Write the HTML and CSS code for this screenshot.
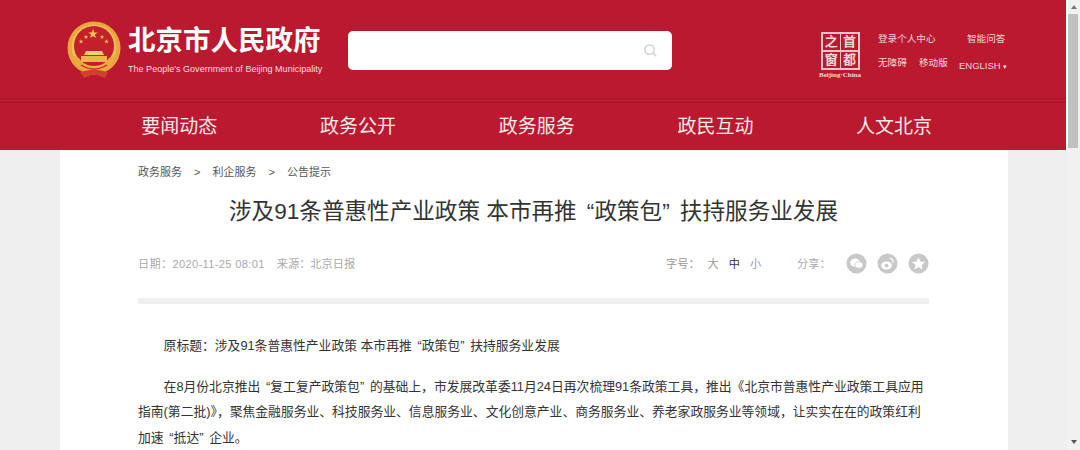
FILE: index.html
```html
<!DOCTYPE html>
<html lang="zh-CN">
<head>
  <meta charset="UTF-8" />
  <title>北京市人民政府</title>
  <link rel="stylesheet" href="styles.css">
</head>
<body>
  <div class="page">
    <header>
      <div class="top-bar">
        <svg class="emblem" viewBox="0 0 54 58" width="54" height="58">
          <defs>
            <polygon id="star" points="0,-5 1.2,-1.6 4.8,-1.5 1.9,0.6 2.9,4 0,2 -2.9,4 -1.9,0.6 -4.8,-1.5 -1.2,-1.6"/>
          </defs>
          <circle cx="27" cy="27" r="26.5" fill="#e9a63c"/>
          <circle cx="27" cy="26" r="22.5" fill="#f0be5a"/>
          <circle cx="27" cy="25" r="20" fill="#c4202c"/>
          <use href="#star" x="26" y="13" fill="#f5cb58"/>
          <use href="#star" x="14" y="21" fill="#f0b95a" transform="translate(7 10) scale(.5)"/>
          <use href="#star" x="18" y="16" fill="#f0b95a" transform="translate(10 8) scale(.5)"/>
          <use href="#star" x="34" y="16" fill="#f0b95a" transform="translate(18 8) scale(.5)"/>
          <use href="#star" x="39" y="21" fill="#f0b95a" transform="translate(20 10) scale(.5)"/>
          <path d="M19 30 H35 L37 34 H17 Z" fill="#f3cd72"/>
          <path d="M14 35 H40 V41 H14 Z" fill="#eeb54e"/>
          <path d="M5 34 Q9 50 27 51 Q45 50 49 34 L42 37 Q37 46 27 46 Q17 46 12 37 Z" fill="#eca93f"/>
          <path d="M14 44 Q27 52 40 44" fill="none" stroke="#c4202c" stroke-width="1.2"/>
          <path d="M13 51 L27 48 L41 51 L38 57 L27 53 L17 57 Z" fill="#d0402c"/>
        </svg>
        <div class="site-name">
          <div class="name-zh">北京市人民政府</div>
          <div class="name-en">The People's Government of Beijing Municipality</div>
        </div>
        <div class="search-box">
          <svg viewBox="0 0 16 16" width="15" height="15">
            <circle cx="7" cy="7" r="5" fill="none" stroke="#d2d2d2" stroke-width="1.6"/>
            <path d="M11 11 L14 14" stroke="#d2d2d2" stroke-width="1.6"/>
          </svg>
        </div>
        <div class="capital-logo">
          <div class="seal">
            <span>之</span><span>首</span><span>窗</span><span>都</span>
          </div>
          <div class="seal-en">Beijing·China</div>
        </div>
        <div class="top-links">
          <div class="link-row">
            <a class="link-login">登录个人中心</a>
            <a>智能问答</a>
          </div>
          <div class="link-row">
            <a class="link-access">无障碍</a>
            <a class="link-mobile">移动版</a>
            <a class="link-lang">ENGLISH <i>▾</i></a>
          </div>
        </div>
      </div>
      <nav>
        <a>要闻动态</a>
        <a>政务公开</a>
        <a>政务服务</a>
        <a>政民互动</a>
        <a>人文北京</a>
      </nav>
    </header>

    <main>
      <div class="crumbs">
        <a>政务服务</a><span>&gt;</span><a>利企服务</a><span>&gt;</span><a>公告提示</a>
      </div>
      <h1>涉及91条普惠性产业政策 本市再推<span class="lq">“</span>政策包<span class="rq">”</span>扶持服务业发展</h1>
      <div class="meta">
        <div class="meta-left">
          <span class="date">日期：2020-11-25 08:01</span>
          <span>来源：北京日报</span>
        </div>
        <div class="font-size">
          <span>字号：</span>
          <a>大</a>
          <a class="current">中</a>
          <a>小</a>
        </div>
        <div class="share">
          <span>分享：</span>
          <svg viewBox="0 0 22 22" width="21" height="21">
            <circle cx="11" cy="11" r="10.5" fill="#c8c8c8"/>
            <ellipse cx="9.5" cy="10" rx="5.2" ry="4.2" fill="#fff"/>
            <ellipse cx="13.5" cy="12.5" rx="4.2" ry="3.4" fill="#fff" stroke="#c8c8c8" stroke-width="0.8"/>
          </svg>
          <svg viewBox="0 0 22 22" width="21" height="21">
            <circle cx="11" cy="11" r="10.5" fill="#c8c8c8"/>
            <ellipse cx="10" cy="13" rx="5.6" ry="4.2" fill="#fff"/>
            <circle cx="10" cy="13.2" r="2" fill="#c8c8c8"/>
            <path d="M13 5.5 A4 4 0 0 1 17 10" fill="none" stroke="#fff" stroke-width="1.3"/>
          </svg>
          <svg viewBox="0 0 22 22" width="21" height="21">
            <circle cx="11" cy="11" r="10.5" fill="#c8c8c8"/>
            <polygon points="11,4.5 13,9 17.8,9.4 14.2,12.5 15.3,17.2 11,14.7 6.7,17.2 7.8,12.5 4.2,9.4 9,9" fill="#fff"/>
          </svg>
        </div>
      </div>
      <div class="divider"></div>
      <article>
        <p>原标题：涉及91条普惠性产业政策 本市再推<span class="lq">“</span>政策包<span class="rq">”</span>扶持服务业发展</p>
        <p>在8月份北京推出<span class="lq">“</span>复工复产政策包<span class="rq">”</span>的基础上，市发展改革委11月24日再次梳理91条政策工具，推出《北京市普惠性产业政策工具应用<br>指南(第二批)》，聚焦金融服务业、科技服务业、信息服务业、文化创意产业、商务服务业、养老家政服务业等领域，让实实在在的政策红利<br>加速<span class="lq">“</span>抵达<span class="rq">”</span>企业。</p>
      </article>
    </main>
  </div>

  <div class="scrollbar">
    <i class="arrow-up"></i>
    <div class="thumb"></div>
    <i class="arrow-down"></i>
  </div>
</body>
</html>
```

FILE: styles.css
```css
* {
  margin: 0;
  padding: 0;
  box-sizing: border-box;
}

html,
body {
  height: 450px;
  overflow: hidden;
}

body {
  display: flex;
  font-family: "Liberation Sans", "Noto Sans CJK SC", sans-serif;
  background: #efefef;
  color: #333;
}

.page {
  width: 1066px;
  flex: none;
}

header {
  background: #bb192f;
  color: #fff;
}

.top-bar {
  display: flex;
  align-items: flex-start;
  height: 103px;
  padding-left: 67px;
  background: linear-gradient(to bottom, transparent 98px, #ae152b 98px, #ae152b 99px, transparent 99px);
  border-bottom: 1px solid #a01226;
}

.emblem {
  margin-top: 21px;
  flex: none;
}

.site-name {
  margin-left: 7px;
  margin-top: 23px;
  width: 220px;
}

.name-zh {
  font-size: 27.5px;
  font-weight: 700;
  line-height: 36px;
  white-space: nowrap;
}

.name-en {
  font-size: 9.05px;
  line-height: 14px;
  margin-top: 3px;
  white-space: nowrap;
  color: #f6dfe2;
}

.search-box {
  display: flex;
  align-items: center;
  justify-content: flex-end;
  width: 324px;
  height: 39px;
  margin-top: 31px;
  padding-right: 14px;
  background: #fff;
  border-radius: 5px;
}

.capital-logo {
  margin-left: 149px;
  margin-top: 32px;
  width: 42px;
}

.seal {
  display: grid;
  grid-template-columns: 1fr 1fr;
  width: 39px;
  height: 38px;
  padding: 2px;
  background: #f0c3ca;
  gap: 1.5px;
}

.seal span {
  background: #bb192f;
  color: #f4d9dd;
  font-size: 13px;
  font-weight: 700;
  line-height: 16px;
  text-align: center;
}

.seal-en {
  margin: 1px 0 0 -2px;
  font-family: "Liberation Serif", serif;
  font-size: 7px;
  font-weight: 700;
  line-height: 8px;
  white-space: nowrap;
  color: #f4d9dd;
}

.top-links {
  margin-left: 15px;
  margin-top: 29px;
  font-size: 9.6px;
  color: #f5d6da;
}

.link-row {
  display: flex;
  align-items: center;
  height: 18px;
  margin-bottom: 6px;
  white-space: nowrap;
}

.link-login {
  width: 89px;
}

.link-access {
  width: 41px;
}

.link-mobile {
  width: 40px;
}

.link-lang {
  font-size: 9.5px;
  padding-top: 6px;
}

.link-lang i {
  font-style: normal;
  font-size: 7px;
}

nav {
  display: grid;
  grid-template-columns: repeat(5, 178.7px);
  height: 47px;
  padding-left: 90px;
  font-size: 19px;
  line-height: 47px;
  text-align: center;
  color: #fbeaec;
}

main {
  width: 948px;
  height: 300px;
  margin-left: 60px;
  padding: 0 79px 0 78px;
  background: #fff;
}

.crumbs {
  display: flex;
  padding-top: 13px;
  font-size: 11px;
  line-height: 18px;
  color: #555;
}

.crumbs span {
  width: 30.5px;
  text-align: center;
}

h1 {
  margin-top: 14px;
  font-size: 22.6px;
  font-weight: 400;
  line-height: 34px;
  text-align: center;
  white-space: nowrap;
  color: #333;
}

.lq {
  padding-left: 0.45em;
}

.rq {
  padding-right: 0.45em;
}

.meta {
  display: flex;
  align-items: center;
  height: 24px;
  margin-top: 22px;
  font-size: 11.2px;
  color: #aaa;
}

.meta-left {
  display: flex;
  gap: 12px;
  width: 528px;
}

.date {
  letter-spacing: 0.3px;
}

.font-size {
  display: flex;
  width: 131px;
  color: #999;
}

.font-size a {
  margin-left: 10px;
}

.font-size a:first-of-type {
  margin-left: 8px;
}

.font-size .current {
  color: #333;
}

.share {
  display: flex;
  align-items: center;
  gap: 10px;
  color: #aaa;
}

.share span {
  margin-right: 5px;
}

.divider {
  height: 6px;
  margin-top: 23px;
  background: #f0f0f0;
}

article {
  margin-top: 29px;
  font-size: 12.8px;
  line-height: 25.5px;
  color: #333;
}

article p {
  text-indent: 2em;
  margin-bottom: 15px;
}

.scrollbar {
  display: flex;
  flex-direction: column;
  flex: none;
  width: 14px;
  height: 450px;
  background: #f1f1f1;
  border-left: 2px solid #fff;
  border-image: linear-gradient(to bottom, #fff 150px, #f1f1f1 150px) 1;
}

.thumb {
  width: 10px;
  height: 134px;
  margin-top: 5px;
  background: #c1c1c1;
}

.arrow-up,
.arrow-down {
  width: 0;
  height: 0;
  margin-left: 3px;
  border-left: 3px solid transparent;
  border-right: 3px solid transparent;
}

.arrow-up {
  margin-top: 5px;
  border-bottom: 4px solid #777;
}

.arrow-down {
  margin-top: 292px;
  border-top: 4px solid #555;
}
```
